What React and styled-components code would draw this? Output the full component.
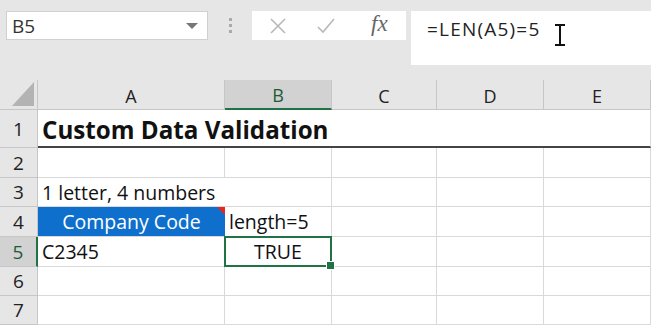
import React from "react";
import styled, { createGlobalStyle } from "styled-components";

const GlobalStyle = createGlobalStyle`
  html, body { margin: 0; padding: 0; background: #e6e6e6; overflow: hidden; }
  #root { width: 651px; height: 325px; }
`;

const UI = `"Segoe UI", "Open Sans", "Liberation Sans", sans-serif`;
const CELL = `"Open Sans", Lato, "Liberation Sans", sans-serif`;

const cols = ["A", "B", "C", "D", "E"];
const colWidths = [187, 107, 105, 107, 107];
const rowHeights = [38, 30, 29, 30, 30, 29, 29];

const App = () => (
  <Page>
    <GlobalStyle />
    <Toolbar>
      <NameBox>
        <span>B5</span>
        <Caret />
      </NameBox>
      <Grip>
        <i />
        <i />
        <i />
      </Grip>
      <Actions>
        <CrossIcon />
        <CheckIcon />
        <Fx>fx</Fx>
      </Actions>
      <FormulaBar>
        <span>=LEN(A5)=5</span>
        <IBeam />
      </FormulaBar>
    </Toolbar>
    <Sheet>
      <Corner>
        <svg width="24" height="26" viewBox="0 0 24 26">
          <polygon points="23,1 23,25 1,25" fill="#b3b3b3" />
        </svg>
      </Corner>
      {cols.map((c) => (
        <ColHead key={c} active={c === "B"}>
          {c}
        </ColHead>
      ))}

      {rowHeights.map((h, i) => {
        const r = i + 1;
        return (
          <React.Fragment key={r}>
            <RowHead active={r === 5}>{r}</RowHead>
            {r === 1 && (
              <Cell thick span={5}>
                <Title>Custom Data Validation</Title>
              </Cell>
            )}
            {r === 3 && (
              <>
                <Cell span={2}>1 letter, 4 numbers</Cell>
                <Cell />
                <Cell />
                <Cell />
              </>
            )}
            {r === 4 && (
              <>
                <HeaderCell>
                  Company Code
                  <Flag />
                </HeaderCell>
                <Cell>length=5</Cell>
                <Cell />
                <Cell />
                <Cell />
              </>
            )}
            {r === 5 && (
              <>
                <Cell>C2345</Cell>
                <Selected>
                  TRUE
                  <Handle />
                </Selected>
                <Cell />
                <Cell />
                <Cell />
              </>
            )}
            {(r === 2 || r > 5) &&
              [0, 1, 2, 3, 4].map((k) => <Cell key={k} />)}
          </React.Fragment>
        );
      })}
    </Sheet>
  </Page>
);

export default App;

const CrossIcon = () => (
  <svg width="18" height="18" viewBox="0 0 18 18">
    <path d="M2 2 L16 16 M16 2 L2 16" stroke="#b8b8b8" strokeWidth="1.6" fill="none" />
  </svg>
);

const CheckIcon = () => (
  <svg width="20" height="18" viewBox="0 0 20 18">
    <path d="M2 10 L7 15 L18 2" stroke="#b8b8b8" strokeWidth="1.6" fill="none" />
  </svg>
);

const IBeam = () => (
  <svg width="14" height="22" viewBox="0 0 14 22" style={{ marginLeft: 13, marginTop: 8 }}>
    <path d="M2 1 H12 M7 1 V21 M2 21 H12" stroke="#111" strokeWidth="2" fill="none" />
  </svg>
);

const Page = styled.div`
  width: 651px;
  height: 325px;
  background: #e6e6e6;
  display: flex;
  flex-direction: column;
`;

const Toolbar = styled.div`
  height: 80px;
  flex: none;
  display: flex;
  align-items: flex-start;
  padding: 11px 0 0 6px;
  box-sizing: border-box;
`;

const NameBox = styled.div`
  width: 202px;
  height: 29px;
  background: #fff;
  border: 1px solid #d0d0d0;
  box-sizing: border-box;
  display: flex;
  align-items: center;
  justify-content: space-between;
  padding: 0 9px 0 5px;
  font-family: ${UI};
  font-size: 19px;
  color: #333;
`;

const Caret = styled.i`
  width: 0;
  height: 0;
  border-left: 6px solid transparent;
  border-right: 6px solid transparent;
  border-top: 6px solid #777;
`;

const Grip = styled.div`
  width: 44px;
  height: 29px;
  display: flex;
  flex-direction: column;
  align-items: center;
  justify-content: center;
  gap: 3px;
  i {
    width: 3px;
    height: 3px;
    background: #aaa;
  }
`;

const Actions = styled.div`
  width: 154px;
  height: 29px;
  background: #fff;
  box-sizing: border-box;
  display: flex;
  align-items: center;
  padding-left: 17px;
  gap: 29px;
`;

const Fx = styled.span`
  font-family: "Liberation Serif", serif;
  font-style: italic;
  font-size: 23px;
  color: #666;
  margin-left: 6px;
  margin-top: -3px;
`;

const FormulaBar = styled.div`
  margin-left: 5px;
  flex: 1;
  height: 54px;
  background: #fff;
  box-sizing: border-box;
  display: flex;
  align-items: flex-start;
  padding: 5px 0 0 16px;
  font-family: ${UI};
  font-size: 19px;
  letter-spacing: 1.2px;
  color: #222;
`;

const Sheet = styled.div`
  display: grid;
  grid-template-columns: 38px ${colWidths.map((w) => w + "px").join(" ")};
  grid-template-rows: 30px ${rowHeights.map((h) => h + "px").join(" ")};
  background: #fff;
  flex: 1;
  overflow: hidden;
`;

const Corner = styled.div`
  background: #e6e6e6;
  border-right: 1px solid #c6c6c6;
  border-bottom: 1px solid #c6c6c6;
  box-sizing: border-box;
  display: flex;
  align-items: flex-end;
  justify-content: flex-end;
  padding: 0 2px 2px 0;
`;

const ColHead = styled.div`
  background: ${(p) => (p.active ? "#d2d2d2" : "#e6e6e6")};
  border-right: 1px solid #c6c6c6;
  border-bottom: ${(p) => (p.active ? "2px solid #217346" : "1px solid #c6c6c6")};
  box-sizing: border-box;
  display: flex;
  align-items: center;
  justify-content: center;
  font-family: ${UI};
  font-size: 18px;
  color: ${(p) => (p.active ? "#1d5b38" : "#222")};
  padding-top: 2px;
`;

const RowHead = styled.div`
  background: ${(p) => (p.active ? "#d2d2d2" : "#e6e6e6")};
  border-right: ${(p) => (p.active ? "2px solid #217346" : "1px solid #c6c6c6")};
  border-bottom: 1px solid #c6c6c6;
  box-sizing: border-box;
  display: flex;
  align-items: center;
  justify-content: center;
  font-family: ${UI};
  font-size: 19px;
  color: ${(p) => (p.active ? "#1d5b38" : "#222")};
`;

const Cell = styled.div`
  grid-column: span ${(p) => p.span || 1};
  border-right: 1px solid #d9d9d9;
  border-bottom: ${(p) => (p.thick ? "2px solid #444" : "1px solid #d9d9d9")};
  box-sizing: border-box;
  display: flex;
  align-items: center;
  padding: 0 4px;
  font-family: ${CELL};
  font-size: 19.5px;
  color: #111;
  white-space: nowrap;
`;

const Title = styled.span`
  font-weight: 700;
  font-size: 24.2px;
  padding-top: 2px;
`;

const HeaderCell = styled.div`
  position: relative;
  background: #0f6fcd;
  color: #fff;
  display: flex;
  align-items: center;
  justify-content: center;
  font-family: ${CELL};
  font-size: 19.5px;
  border-bottom: 1px solid #d9d9d9;
  box-sizing: border-box;
`;

const Flag = styled.i`
  position: absolute;
  top: 0;
  right: 0;
  width: 0;
  height: 0;
  border-top: 8px solid #e8271c;
  border-left: 8px solid transparent;
`;

const Selected = styled.div`
  position: relative;
  border: 2px solid #217346;
  margin: -1px 0 0 -1px;
  display: flex;
  align-items: center;
  justify-content: center;
  font-family: ${CELL};
  font-size: 19.5px;
  color: #111;
`;

const Handle = styled.i`
  position: absolute;
  right: -5px;
  bottom: -5px;
  width: 7px;
  height: 7px;
  background: #217346;
  border: 1px solid #fff;
`;
